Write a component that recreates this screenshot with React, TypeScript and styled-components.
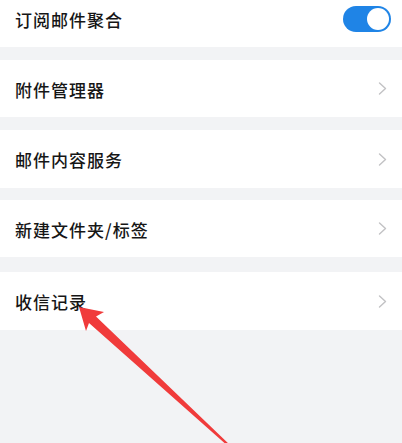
import React from 'react'
import styled, { createGlobalStyle } from 'styled-components'

const Global = createGlobalStyle`
  html, body {
    margin: 0;
    padding: 0;
    background: #f2f3f5;
  }
  body {
    font-family: "Noto Sans CJK SC", "Noto Sans", sans-serif;
  }
`

const Page = styled.div`
  position: relative;
  width: 402px;
  height: 443px;
  overflow: hidden;
  background: #f2f3f5;
  display: flex;
  flex-direction: column;
`

const Row = styled.div<{ $top: number; $h: number }>`
  margin-top: ${(p) => p.$top}px;
  height: ${(p) => p.$h}px;
  flex-shrink: 0;
  background: #ffffff;
  display: flex;
  align-items: center;
  justify-content: space-between;
  padding: 0 11px 0 15px;
`

const Label = styled.span`
  font-size: 17px;
  font-weight: 500;
  letter-spacing: 1px;
  color: #161616;
  line-height: 1;
  padding-top: 1px;
`

const Track = styled.div`
  width: 48px;
  height: 26px;
  border-radius: 13px;
  background: #1f84e6;
  display: flex;
  align-items: center;
  justify-content: flex-end;
  padding-right: 2px;
  box-sizing: border-box;
`

const Knob = styled.div`
  width: 22px;
  height: 22px;
  border-radius: 50%;
  background: #ffffff;
`

const Chevron = styled.svg`
  width: 9px;
  height: 13px;
  margin-right: 4px;
`

const Arrow = styled.svg`
  position: absolute;
  left: 0;
  top: 0;
  pointer-events: none;
`

const items = [
  { label: '附件管理器', top: 13, h: 57 },
  { label: '邮件内容服务', top: 13, h: 58 },
  { label: '新建文件夹/标签', top: 12, h: 57 },
  { label: '收信记录', top: 15, h: 58 },
]

const Arrowhead = () => (
  <Chevron viewBox="0 0 9 13">
    <polyline points="1.5,1 7.5,6.5 1.5,12" fill="none" stroke="#c2c2c4" strokeWidth="1.4" strokeLinejoin="round" strokeLinecap="round" />
  </Chevron>
)

export default function App() {
  return (
    <>
      <Global />
      <Page>
        <Row $top={-10} $h={57}>
          <Label>订阅邮件聚合</Label>
          <Track>
            <Knob />
          </Track>
        </Row>
        {items.map((it) => (
          <Row key={it.label} $top={it.top} $h={it.h}>
            <Label>{it.label}</Label>
            <Arrowhead />
          </Row>
        ))}
        <Arrow width="402" height="443" viewBox="0 0 402 443">
          <polygon
            points="79,307 104,312 96,316.5 231,446 229,447 89,323 86,331"
            fill="#f03b3b"
          />
        </Arrow>
      </Page>
    </>
  )
}
